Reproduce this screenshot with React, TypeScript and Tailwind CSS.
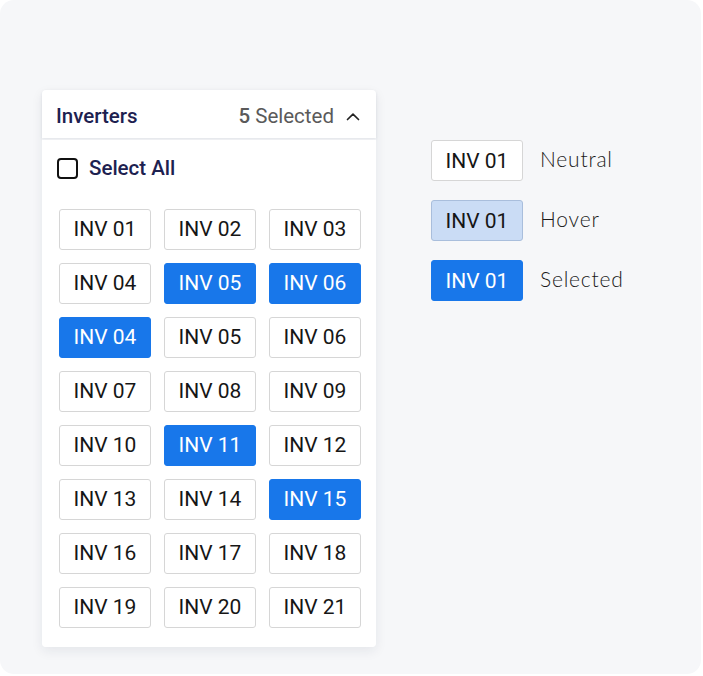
import React from 'react';

const items = [
  ['INV 01', false], ['INV 02', false], ['INV 03', false],
  ['INV 04', false], ['INV 05', true], ['INV 06', true],
  ['INV 04', true], ['INV 05', false], ['INV 06', false],
  ['INV 07', false], ['INV 08', false], ['INV 09', false],
  ['INV 10', false], ['INV 11', true], ['INV 12', false],
  ['INV 13', false], ['INV 14', false], ['INV 15', true],
  ['INV 16', false], ['INV 17', false], ['INV 18', false],
  ['INV 19', false], ['INV 20', false], ['INV 21', false],
] as const;

type Variant = 'neutral' | 'hover' | 'selected';

const variantClass: Record<Variant, string> = {
  neutral: 'bg-white border-[#d6d6d6] text-[#161616]',
  hover: 'bg-[#cadcf5] border-[#a9bedc] text-[#161616]',
  selected: 'bg-[#1877ea] border-[#1877ea] text-white',
};

const Chip = ({ label, variant }: { label: string; variant: Variant }) => (
  <button
    className={`h-[41px] w-[92px] rounded-[3px] border flex items-center justify-center pt-[1px] text-[21px] leading-none font-['Roboto',sans-serif] ${variantClass[variant]}`}
  >
    {label}
  </button>
);

function App() {
  return (
    <div className="w-[703px] h-[676px] bg-white">
      <div className="w-[701px] h-[674px] rounded-[14px] bg-[#f6f7f9] flex pt-[90px] pl-[42px]">
        {/* Dropdown panel */}
        <div className="w-[334px] self-start flex flex-col gap-[2px] shadow-[0_4px_12px_rgba(30,40,70,0.08)] rounded-[4px]">
          <div className="h-[48px] bg-white rounded-t-[4px] shadow-[0_1px_3px_rgba(30,40,70,0.1)] flex items-center justify-between pl-[14px] pr-[15px] font-['Roboto',sans-serif]">
            <span className="text-[20.5px] font-medium text-[#1d2150] pt-[5px]">Inverters</span>
            <div className="flex items-center gap-[11px] pt-[5px]">
              <span className="text-[20.5px] text-[#5a5a5a]">
                <span className="font-medium">5</span> Selected
              </span>
              <svg width="16" height="16" viewBox="0 0 16 16" fill="none">
                <path d="M2.5 10.5 8 5.2l5.5 5.3" stroke="#222" strokeWidth="1.7" strokeLinecap="round" strokeLinejoin="round" />
              </svg>
            </div>
          </div>
          <div className="bg-white rounded-b-[4px] pl-[17px] pr-[15px] pt-[13px] pb-[19px]">
            <label className="flex items-center gap-[11px] -ml-[2px] mb-[25px] font-['Roboto',sans-serif]">
              <span className="w-[21px] h-[21px] border-[2.5px] border-[#111] rounded-[4px] bg-white" />
              <span className="text-[20.5px] font-medium text-[#1d2150]">Select All</span>
            </label>
            <div className="grid grid-cols-[92px_92px_92px] gap-x-[13px] gap-y-[13px]">
              {items.map(([label, sel], i) => (
                <Chip key={i} label={label} variant={sel ? 'selected' : 'neutral'} />
              ))}
            </div>
          </div>
        </div>

        {/* Legend */}
        <div className="ml-[55px] mt-[50px] flex flex-col gap-[19px] self-start">
          {([
            ['neutral', 'Neutral'],
            ['hover', 'Hover'],
            ['selected', 'Selected'],
          ] as [Variant, string][]).map(([v, text]) => (
            <div key={v} className="flex items-center gap-[17px]">
              <Chip label="INV 01" variant={v} />
              <span className="text-[21px] font-light text-[#1a1a1a] font-['Lato',sans-serif] tracking-[0.8px] -mt-[3px]">{text}</span>
            </div>
          ))}
        </div>
      </div>
    </div>
  );
}

export default App;
